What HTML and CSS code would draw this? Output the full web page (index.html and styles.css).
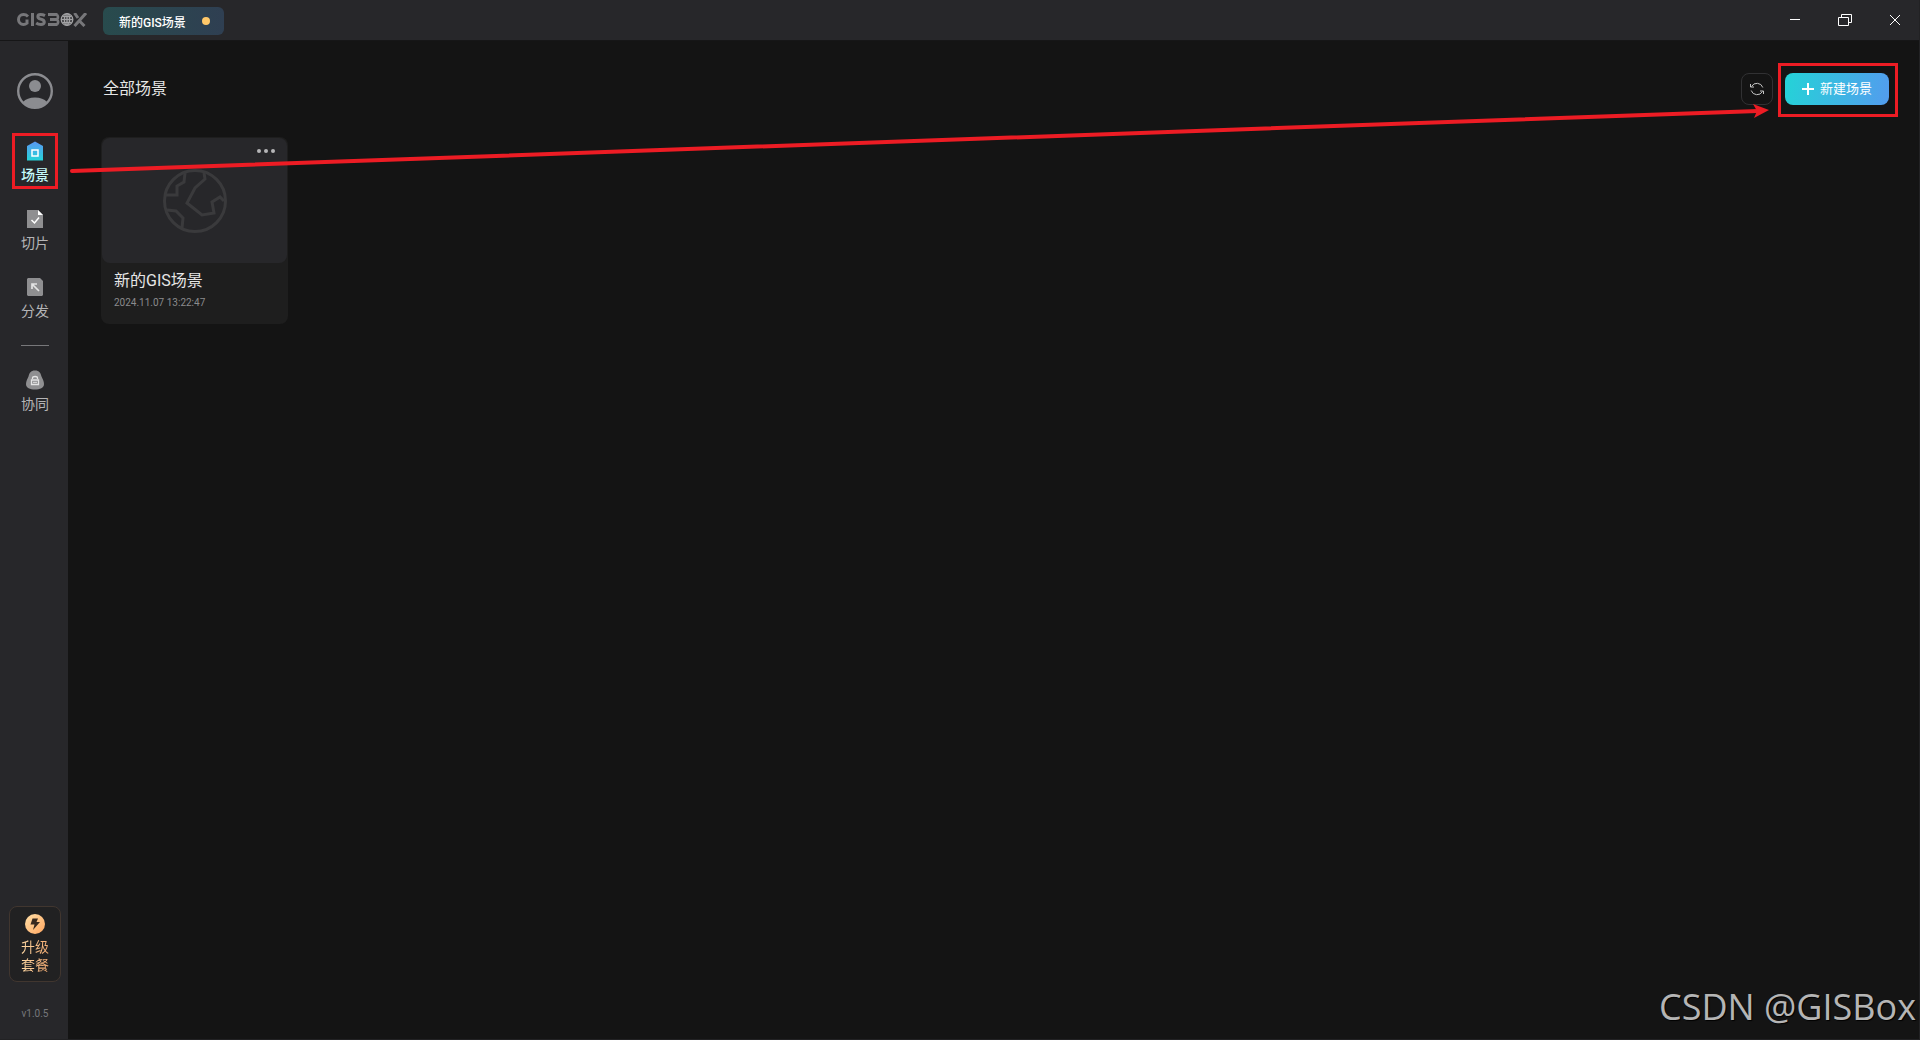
FILE: index.html
```html
<!DOCTYPE html>
<html lang="zh-CN">
<head>
    <meta charset="UTF-8">
    <meta name="viewport" content="width=device-width, initial-scale=1.0">
    <title>GISBox</title>
    <link rel="stylesheet" href="styles.css">
</head>
<body>

<div class="app">
    <!-- Title bar -->
    <header class="titlebar">
        <svg class="logo" viewBox="0 0 70 14" role="img" aria-label="GISBOX">
            <g fill="none" stroke="#77777a" stroke-width="3">
                <path d="M11 3.5C9.5 2 8 1.6 6.500 1.600C3.500 1.600 1.500 4 1.500 6.500S3.500 11.400 6.500 11.400C8 11.400 9 11 10 10.200V6.500"/>
                <path d="M15.500 0V13"/>
                <path d="M28 2.600C26.500 1.800 25 1.500 23.500 1.500C20 1.500 20 5.200 23.500 6C28.500 7 28.500 11.500 24 11.500C22 11.500 20.500 11 19.200 10"/>
                <path d="M31 1.500H40.500M33 6.500H40.500M31 11.500H40.500"/>
                <path d="M40 1.500Q42 4 40 6.500Q42.500 9 40 11.500" stroke-width="2.500"/>
                <path d="M57.500 0L61 5M63 8.500L67.500 13M69 0L57.500 13"/>
            </g>
            <g fill="none" stroke="#a2a2a4" stroke-width="1.300">
                <circle cx="50" cy="6.500" r="5.800"/>
                <ellipse cx="50" cy="6.500" rx="2.600" ry="5.800"/>
                <path d="M44.200 6.500H55.800M50 .7V12.300M45.500 3.500H54.500M45.500 9.500H54.500"/>
            </g>
        </svg>
        <a class="tab" href="#">新的GIS场景<span class="tab-dot"></span></a>
        <div class="window-controls">
            <button aria-label="最小化">
                <svg width="14" height="14" viewBox="0 0 14 14"><path d="M2 6.500H12"/></svg>
            </button>
            <button aria-label="还原">
                <svg width="14" height="14" viewBox="0 0 14 14"><path d="M.5 4.500H10.500V12.500H.5ZM3.500 4.500V1.500H13.500V9.500H10.500"/></svg>
            </button>
            <button aria-label="关闭">
                <svg width="14" height="14" viewBox="0 0 14 14"><path d="M2 2L12 12M12 2L2 12"/></svg>
            </button>
        </div>
    </header>

    <!-- Sidebar -->
    <aside class="sidebar">
        <button class="avatar" aria-label="用户">
            <svg width="36" height="36" viewBox="0 0 36 36">
                <circle cx="18" cy="18" r="16.800" fill="none" stroke="#8b8c90" stroke-width="2.400"/>
                <circle cx="18" cy="13" r="6" fill="#8b8c90"/>
                <path d="M6 29Q10 24.500 18 24.500T30 29Q25 35 18 35T6 29Z" fill="#8b8c90"/>
            </svg>
        </button>
        <nav class="nav">
            <a class="nav-item active" href="#">
                <svg width="20" height="20" viewBox="0 0 20 20">
                    <defs>
                        <linearGradient id="home" x1="0" y1="0" x2="0" y2="1">
                            <stop offset="0" stop-color="#5b97f2"/>
                            <stop offset="1" stop-color="#25d3d8"/>
                        </linearGradient>
                    </defs>
                    <path d="M10 .5L18 5V19.500H2V5Z" fill="url(#home)"/>
                    <rect x="7" y="9" width="6" height="6" fill="none" stroke="#fff" stroke-width="1.500"/>
                </svg>
                <span>场景</span>
            </a>
            <a class="nav-item" href="#">
                <svg width="20" height="20" viewBox="0 0 20 20">
                    <path d="M2 1H13L18 6V19H2Z" fill="#8f8f91"/>
                    <path d="M13 1V6H18Z" fill="#fff"/>
                    <path d="M6.500 11L9.500 14L14 8.500" fill="none" stroke="#fff" stroke-width="1.500"/>
                </svg>
                <span>切片</span>
            </a>
            <a class="nav-item" href="#">
                <svg width="20" height="20" viewBox="0 0 20 20">
                    <path d="M3 1H15L18 4V18L17 19H3L2 18V2Z" fill="#8f8f91"/>
                    <path d="M7 12V7H12M7 7L14 14" fill="none" stroke="#e4e4e4" stroke-width="1.700"/>
                </svg>
                <span>分发</span>
            </a>
            <hr class="nav-divider">
            <a class="nav-item" href="#">
                <svg width="20" height="20" viewBox="0 0 20 20">
                    <path d="M10 .5C14.500 .5 15.500 3 16.500 6.500C17.500 9 19 11 19 14C19 18 15 19.500 10 19.500S1 18 1 14C1 11 2.500 9 3.500 6.500C4.500 3 5.500 .5 10 .5Z" fill="#8f8f91"/>
                    <path d="M7.500 9V8Q7.500 6.500 10 6.500T12.500 8V9" fill="none" stroke="#e4e4e4" stroke-width="1.300"/>
                    <path d="M6.500 10H13.500V14.500H6.500Z" fill="none" stroke="#e4e4e4" stroke-width="1.300"/>
                    <path d="M8 12.300H12" stroke="#e4e4e4"/>
                </svg>
                <span>协同</span>
            </a>
        </nav>
        <button class="upgrade">
            <svg width="20" height="20" viewBox="0 0 20 20">
                <defs>
                    <linearGradient id="gold" x1="0" y1="0" x2="1" y2="1">
                        <stop offset="0" stop-color="#ffe0a8"/>
                        <stop offset="1" stop-color="#ffa660"/>
                    </linearGradient>
                </defs>
                <circle cx="10" cy="10" r="10" fill="url(#gold)"/>
                <path d="M7.500 4.500H13L11.500 8H15L8 16L9.500 10.500H5.500Z" fill="#38291e"/>
            </svg>
            <span>升级<br>套餐</span>
        </button>
        <div class="version">v1.0.5</div>
    </aside>

    <!-- Scene list -->
    <main class="content">
        <div class="toolbar">
            <h1>全部场景</h1>
            <button class="refresh" aria-label="刷新">
                <svg width="16" height="16" viewBox="0 0 16 16">
                    <path d="M2.500 5.500A6.200 6.200 0 0 1 13.800 6.500M13.500 10.500A6.200 6.200 0 0 1 2.200 9.500M1.500 3V6H5M14.500 13V10H11"/>
                </svg>
            </button>
            <button class="create">
                <svg width="12" height="12" viewBox="0 0 12 12"><path d="M6 0V12M0 6H12"/></svg>
                新建场景
            </button>
        </div>
        <div class="scenes">
            <article class="card">
                <div class="thumb">
                    <button class="more" aria-label="更多"><i></i><i></i><i></i></button>
                    <svg class="globe" width="64" height="64" viewBox="0 0 64 64">
                        <circle cx="32" cy="32" r="30.500"/>
                        <path d="M22 4L21 13L14 17V26H3M4 41L13 42L20 49L19 59M41 4L42 10L32 19L24 34L39 46L51 44L49 33L57 28L61 32"/>
                    </svg>
                </div>
                <h2>新的GIS场景</h2>
                <time>2024.11.07 13:22:47</time>
            </article>
        </div>
    </main>

    <!-- Annotations over the window -->
    <div class="mark mark-nav"></div>
    <div class="mark mark-create"></div>
    <svg class="arrow" width="1704" height="72" viewBox="0 0 1704 72">
        <path d="M4 69L1690 9" fill="none" stroke="#ed1c24" stroke-width="4" stroke-linecap="round"/>
        <path d="M1685 2L1701 8L1686 16L1689 9Z" fill="#ed1c24"/>
    </svg>
    <div class="watermark">CSDN @GISBox</div>
</div>

</body>
</html>
```

FILE: styles.css
```css
* {
    box-sizing: border-box;
}

body {
    margin: 0;
    background: #141414;
    color: #e6e6e6;
    font-family: Roboto, "Noto Sans CJK SC", sans-serif;
}

button {
    padding: 0;
    border: none;
    background: none;
    color: inherit;
    font: inherit;
    cursor: pointer;
}

a {
    color: inherit;
    text-decoration: none;
}

.app {
    position: relative;
    display: grid;
    grid-template-columns: 68px 1fr;
    grid-template-rows: 41px 1fr;
    min-height: 100vh;
    border: 1px solid #222224;
    border-width: 0 1px 1px 0;
}

/* Title bar */
.titlebar {
    grid-column: 1 / 3;
    display: flex;
    align-items: center;
    padding-left: 17px;
    background: #27272a;
    border-bottom: 1px solid #161617;
}

.logo {
    width: 70px;
    height: 14px;
}

.tab {
    display: flex;
    align-items: center;
    justify-content: space-between;
    width: 121px;
    height: 28px;
    margin: 2px 0 0 16px;
    padding: 0 14px 0 16px;
    border-radius: 6px;
    background: linear-gradient(90deg, #284b4d, #2f3f52);
    color: #fff;
    font-size: 12px;
    font-weight: 500;
}

.tab-dot {
    width: 8px;
    height: 8px;
    border-radius: 50%;
    background: #ffc869;
}

.window-controls {
    display: flex;
    gap: 36px;
    margin-left: auto;
    padding-right: 17px;
}

.window-controls button {
    display: flex;
}

.window-controls svg {
    fill: none;
    stroke: #fff;
}

/* Sidebar */
.sidebar {
    display: flex;
    flex-direction: column;
    align-items: center;
    padding: 32px 0 15px 2px;
    background: #27272a;
}

.avatar {
    display: flex;
}

.nav {
    display: flex;
    flex-direction: column;
    align-items: center;
    gap: 24px;
    margin-top: 32px;
}

.nav-item {
    display: flex;
    flex-direction: column;
    align-items: center;
    gap: 4px;
    color: #b4b4b6;
    font-size: 14px;
    line-height: 20px;
}

.nav-item.active {
    color: #c4fbfa;
    font-weight: 500;
}

.nav-divider {
    width: 28px;
    height: 1px;
    margin: 0;
    border: none;
    background: #77777a;
}

.upgrade {
    display: flex;
    flex-direction: column;
    align-items: center;
    gap: 4px;
    width: 52px;
    margin-top: auto;
    padding: 7px 0;
    border: 1px solid #41362f;
    border-radius: 8px;
    background: #212122;
    font-size: 14px;
    line-height: 18px;
}

.upgrade span {
    background: linear-gradient(90deg, #ffd9a4, #f5ab71);
    background-clip: text;
    color: transparent;
}

.version {
    margin-top: 22px;
    color: #77787c;
    font-size: 10px;
    line-height: 20px;
}

/* Scene list */
.content {
    padding: 32px 30px 32px 33px;
}

.toolbar {
    display: flex;
    align-items: center;
    gap: 12px;
    padding-left: 2px;
}

.toolbar h1 {
    margin: 0 auto 0 0;
    font-size: 16px;
    font-weight: 400;
    line-height: 24px;
}

.refresh,
.create {
    display: flex;
    align-items: center;
    justify-content: center;
    height: 32px;
    border-radius: 8px;
}

.refresh {
    width: 32px;
    border: 1px solid #313133;
}

.refresh svg {
    fill: none;
    stroke: #c4c4c4;
}

.create {
    gap: 6px;
    width: 104px;
    background: linear-gradient(100deg, #24d3d7, #539cee);
    color: #fff;
    font-size: 13px;
    line-height: 20px;
}

.create svg {
    stroke: #fff;
    stroke-width: 2;
}

.scenes {
    display: grid;
    grid-template-columns: repeat(auto-fill, 187px);
    gap: 20px;
    margin-top: 32px;
}

.card {
    padding: 1px 1px 11px;
    border-radius: 8px;
    background: #1e1e1e;
}

.thumb {
    position: relative;
    display: flex;
    align-items: center;
    justify-content: center;
    height: 125px;
    border-radius: 8px;
    background: #27272a;
}

.more {
    position: absolute;
    top: 11px;
    right: 12px;
    display: flex;
    gap: 3px;
}

.more i {
    width: 4px;
    height: 4px;
    border-radius: 50%;
    background: #b5b5b7;
}

.globe {
    fill: none;
    stroke: #3a3a3c;
    stroke-width: 3;
}

.card h2 {
    margin: 6px 12px 0;
    font-size: 16px;
    font-weight: 400;
    line-height: 24px;
}

.card time {
    display: block;
    margin: 0 12px;
    color: #8b8b8d;
    font-size: 10px;
    line-height: 20px;
}

/* Annotations */
.mark {
    position: absolute;
    border: 3px solid #ed1c24;
}

.mark-nav {
    top: 133px;
    left: 12px;
    width: 46px;
    height: 56px;
}

.mark-create {
    top: 63px;
    right: 21px;
    width: 120px;
    height: 54px;
}

.arrow {
    position: absolute;
    top: 102px;
    left: 68px;
    pointer-events: none;
}

.watermark {
    position: absolute;
    right: 3px;
    bottom: 10px;
    color: #b5b5b5;
    font-family: "Open Sans", sans-serif;
    font-size: 36px;
    line-height: 44px;
    text-shadow: 1px 1px 1px #000;
}
```
